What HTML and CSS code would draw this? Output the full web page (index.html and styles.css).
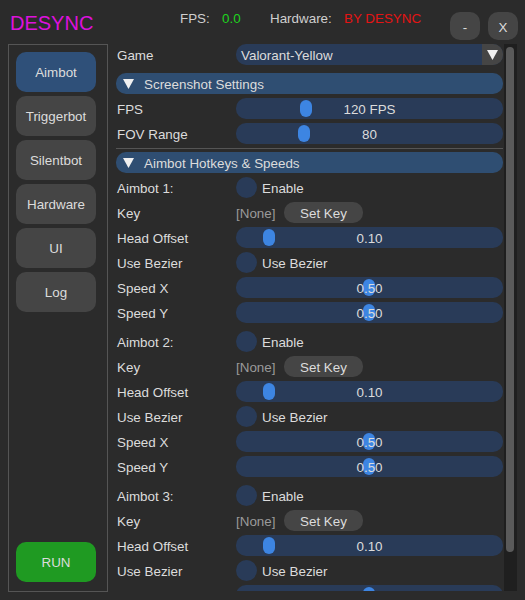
FILE: index.html
```html
<!DOCTYPE html>
<html>
<head>
<meta charset="utf-8">
<link rel="stylesheet" href="styles.css">
</head>
<body>
<div class="topbar">
  <span class="title">DESYNC</span>
  <span class="stat fps-label">FPS:</span>
  <span class="stat fps-val">0.0</span>
  <span class="stat hw-label">Hardware:</span>
  <span class="stat hw-val">BY DESYNC</span>
  <div class="win-btns">
    <div class="win-btn">-</div>
    <div class="win-btn">X</div>
  </div>
</div>
<div class="main">
  <div class="sidebar">
    <div class="nav-btn active">Aimbot</div>
    <div class="nav-btn">Triggerbot</div>
    <div class="nav-btn">Silentbot</div>
    <div class="nav-btn">Hardware</div>
    <div class="nav-btn">UI</div>
    <div class="nav-btn">Log</div>
    <div class="nav-btn run">RUN</div>
  </div>
  <div class="content">
    <div class="row game-row">
      <div class="label">Game</div>
      <div class="widget combo"><span class="combo-text">Valorant-Yellow</span><span class="combo-arrow"><svg width="11" height="10" viewBox="0 0 11 10"><polygon points="0,0 11,0 5.5,10" fill="#f0f0f0"/></svg></span></div>
    </div>
    <div class="header"><svg class="tri" width="11" height="10" viewBox="0 0 11 10"><polygon points="0,0 11,0 5.5,10" fill="#f0f0f0"/></svg><span class="htext">Screenshot Settings</span></div>
    <div class="row"><div class="label">FPS</div><div class="widget slider"><div class="grab" style="left:64px"></div><span class="val">120 FPS</span></div></div>
    <div class="row"><div class="label">FOV Range</div><div class="widget slider"><div class="grab" style="left:62px"></div><span class="val">80</span></div></div>
    <div class="sep"></div>
    <div class="header"><svg class="tri" width="11" height="10" viewBox="0 0 11 10"><polygon points="0,0 11,0 5.5,10" fill="#f0f0f0"/></svg><span class="htext">Aimbot Hotkeys &amp; Speeds</span></div>

    <div class="group">
      <div class="row"><div class="label">Aimbot 1:</div><div class="widget check"><span class="circle"></span><span class="check-text">Enable</span></div></div>
      <div class="row"><div class="label">Key</div><div class="widget keyrow"><span class="none">[None]</span><span class="setkey">Set Key</span></div></div>
      <div class="row"><div class="label">Head Offset</div><div class="widget slider"><div class="grab" style="left:27px"></div><span class="val">0.10</span></div></div>
      <div class="row"><div class="label">Use Bezier</div><div class="widget check"><span class="circle"></span><span class="check-text">Use Bezier</span></div></div>
      <div class="row"><div class="label">Speed X</div><div class="widget slider"><div class="grab" style="left:127px"></div><span class="val">0.50</span></div></div>
      <div class="row"><div class="label">Speed Y</div><div class="widget slider"><div class="grab" style="left:127px"></div><span class="val">0.50</span></div></div>
    </div>

    <div class="group spaced">
      <div class="row"><div class="label">Aimbot 2:</div><div class="widget check"><span class="circle"></span><span class="check-text">Enable</span></div></div>
      <div class="row"><div class="label">Key</div><div class="widget keyrow"><span class="none">[None]</span><span class="setkey">Set Key</span></div></div>
      <div class="row"><div class="label">Head Offset</div><div class="widget slider"><div class="grab" style="left:27px"></div><span class="val">0.10</span></div></div>
      <div class="row"><div class="label">Use Bezier</div><div class="widget check"><span class="circle"></span><span class="check-text">Use Bezier</span></div></div>
      <div class="row"><div class="label">Speed X</div><div class="widget slider"><div class="grab" style="left:127px"></div><span class="val">0.50</span></div></div>
      <div class="row"><div class="label">Speed Y</div><div class="widget slider"><div class="grab" style="left:127px"></div><span class="val">0.50</span></div></div>
    </div>

    <div class="group spaced">
      <div class="row"><div class="label">Aimbot 3:</div><div class="widget check"><span class="circle"></span><span class="check-text">Enable</span></div></div>
      <div class="row"><div class="label">Key</div><div class="widget keyrow"><span class="none">[None]</span><span class="setkey">Set Key</span></div></div>
      <div class="row"><div class="label">Head Offset</div><div class="widget slider"><div class="grab" style="left:27px"></div><span class="val">0.10</span></div></div>
      <div class="row"><div class="label">Use Bezier</div><div class="widget check"><span class="circle"></span><span class="check-text">Use Bezier</span></div></div>
      <div class="row"><div class="label">Speed X</div><div class="widget slider"><div class="grab" style="left:127px"></div><span class="val">0.50</span></div></div>
      <div class="row"><div class="label">Speed Y</div><div class="widget slider"><div class="grab" style="left:127px"></div><span class="val">0.50</span></div></div>
    </div>
  </div>
  <div class="scrollbar"><div class="thumb"></div></div>
</div>
</body>
</html>
```

FILE: styles.css
```css
* { box-sizing: border-box; }
html, body { margin: 0; padding: 0; }
body {
  background: #2b2b2b;
  color: #dcdcdc;
  font-family: "Liberation Sans", Arial, sans-serif;
  font-size: 13.4px;
  width: 525px;
  height: 600px;
  overflow: hidden;
}

.topbar {
  display: flex;
  align-items: flex-start;
  height: 44px;
}
.title {
  width: 170px;
  margin-left: 10px;
  margin-top: 11px;
  font-size: 20px;
  line-height: 24px;
  color: #dd11dd;
}
.stat {
  margin-top: 11px;
  line-height: 16px;
}
.fps-label { width: 42px; color: #cfcfcf; }
.fps-val { width: 48px; color: #1ed41e; }
.hw-label { width: 74px; color: #cfcfcf; }
.hw-val { color: #e41414; }
.win-btns {
  margin-left: auto;
  margin-right: 7px;
  margin-top: 12px;
  display: flex;
  gap: 8px;
}
.win-btn {
  width: 30px;
  height: 28px;
  padding-top: 2px;
  border-radius: 10px;
  background: #454545;
  color: #dcdcdc;
  display: flex;
  align-items: center;
  justify-content: center;
}

.main {
  display: flex;
  padding-left: 8px;
  height: 547px;
}
.sidebar {
  width: 100px;
  height: 548px;
  flex-shrink: 0;
  border: 1px solid #555;
  padding: 7px 7px 9px 7px;
  display: flex;
  flex-direction: column;
  gap: 4px;
}
.nav-btn {
  width: 80px;
  height: 40px;
  border-radius: 10px;
  background: #454545;
  color: #dcdcdc;
  display: flex;
  align-items: center;
  justify-content: center;
}
.nav-btn.active { background: #2f5079; }
.nav-btn.run { background: #1f9a22; margin-top: auto; }

.content {
  margin-left: 8px;
  width: 387px;
  height: 547px;
  overflow: hidden;
  display: flex;
  flex-direction: column;
  gap: 4px;
}
.group {
  display: flex;
  flex-direction: column;
  gap: 4px;
}
.group.spaced { margin-top: 4px; }
.row {
  display: flex;
  align-items: center;
  height: 21px;
  flex-shrink: 0;
}
.game-row { margin-bottom: 4px; }
.label {
  width: 120px;
  padding-left: 1px;
  padding-top: 2px;
  white-space: nowrap;
}
.widget {
  width: 267px;
  height: 21px;
  flex-shrink: 0;
}
.combo {
  background: #293b58;
  border-radius: 10px;
  display: flex;
  align-items: center;
  overflow: hidden;
}
.combo-text { flex: 1; padding-left: 5px; padding-top: 2px; }
.combo-arrow {
  width: 21px;
  height: 21px;
  background: #454545;
  display: flex;
  align-items: center;
  justify-content: center;
}
.header {
  height: 21px;
  flex-shrink: 0;
  background: #2f4e72;
  border-radius: 10px;
  display: flex;
  align-items: center;
  padding-left: 7px;
}
.header .tri { margin-right: 10px; }
.htext { padding-top: 2px; }
.sep {
  height: 1px;
  flex-shrink: 0;
  background: #555;
  margin-bottom: -1px;
}
.slider {
  position: relative;
  background: #293b58;
  border-radius: 10px;
  display: flex;
  align-items: center;
  justify-content: center;
}
.grab {
  position: absolute;
  top: 2px;
  width: 12px;
  height: 17px;
  border-radius: 6px;
  background: #3d85e2;
}
.val { position: relative; padding-top: 2px; }
.check { display: flex; align-items: center; }
.circle {
  width: 21px;
  height: 21px;
  border-radius: 50%;
  background: #293b58;
}
.check-text { margin-left: 5px; padding-top: 2px; }
.keyrow { display: flex; align-items: center; }
.none { width: 48px; color: #9a9a9a; padding-top: 2px; }
.setkey {
  width: 79px;
  height: 21px;
  padding-top: 2px;
  border-radius: 10px;
  background: #454545;
  display: flex;
  align-items: center;
  justify-content: center;
}

.scrollbar {
  margin-left: 1px;
  width: 13px;
  height: 547px;
  background: #1f1f1f;
  padding: 3px 3px 0 2px;
}
.thumb {
  width: 8px;
  height: 505px;
  border-radius: 4px;
  background: #5a5a5a;
}
```
